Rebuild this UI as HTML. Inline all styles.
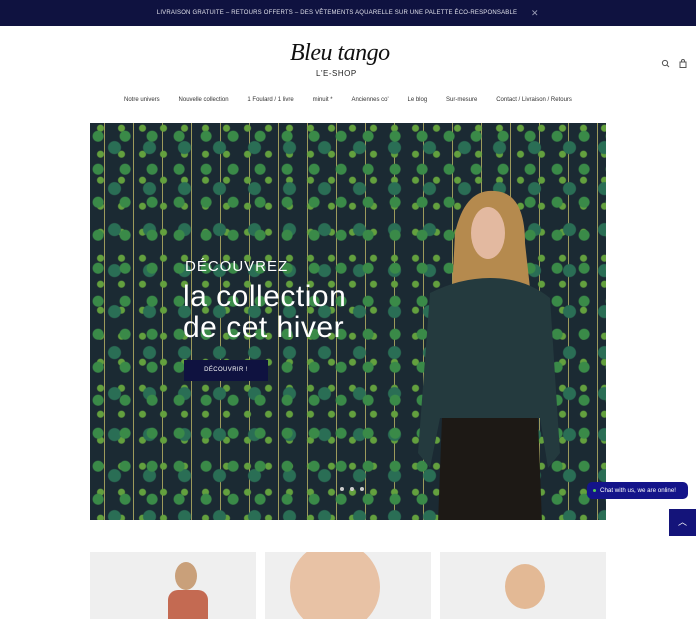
<!DOCTYPE html>
<html><head><meta charset="utf-8"><style>
*{margin:0;padding:0;box-sizing:border-box}
body{width:696px;height:619px;overflow:hidden;background:#fff;font-family:"Liberation Sans",sans-serif;position:relative}
.top{position:absolute;left:0;top:0;width:696px;height:26px;background:#0f1240;color:#dfe0ea;font-size:6px;letter-spacing:.2px;line-height:26px}
.top span{position:absolute;left:155px;top:0;width:364px;text-align:center;white-space:nowrap}
.top b{position:absolute;left:531px;top:0;font-size:9px;color:#9a9cb5;font-weight:normal}
.logo{position:absolute;left:290px;top:40px;font-family:"Liberation Serif",serif;font-style:italic;font-size:24px;color:#111;letter-spacing:-.5px}
.shop{position:absolute;left:316px;top:69px;font-size:8px;color:#222;letter-spacing:.5px}
.nav{position:absolute;top:97px;left:124px;width:448px;font-size:6px;color:#333;display:flex;justify-content:space-between;white-space:nowrap}
.hero{position:absolute;left:90px;top:123px;width:516px;height:397px;overflow:hidden;background:#1b2a33;
background-image:radial-gradient(circle at 30% 40%,#3a8a48 0 5px,transparent 6px),radial-gradient(circle at 70% 60%,#2a6e55 0 6px,transparent 7px),radial-gradient(circle at 50% 20%,#63a03e 0 3px,transparent 4px),linear-gradient(90deg,transparent 49%,#9c9a5c 49% 51%,transparent 51%);
background-size:27px 33px,35px 41px,21px 26px,29px 47px}
.txt{position:absolute;color:#fff}
.btn{position:absolute;left:94px;top:237px;width:84px;height:21px;background:#0f1240;color:#fff;font-size:6px;text-align:center;line-height:21px;letter-spacing:.4px}
.card{position:absolute;top:552px;width:166px;height:67px;background:#efefef;overflow:hidden}
</style></head><body>
<div class="top"><span>LIVRAISON GRATUITE – RETOURS OFFERTS – DES VÊTEMENTS AQUARELLE SUR UNE PALETTE ÉCO-RESPONSABLE</span><b>✕</b></div>
<div class="logo">Bleu tango</div>
<div class="shop">L'E-SHOP</div>
<svg style="position:absolute;left:661px;top:59px" width="26" height="9"><circle cx="4" cy="4" r="2.6" fill="none" stroke="#555" stroke-width="1"/><line x1="6" y1="6" x2="8" y2="8" stroke="#555"/><path d="M19 3h6v5.5h-6z M20.5 3v-1a1.5 1.5 0 0 1 3 0v1" fill="none" stroke="#555" stroke-width="1"/></svg>
<div class="nav"><span>Notre univers</span><span>Nouvelle collection</span><span>1 Foulard / 1 livre</span><span>minuit *</span><span>Anciennes co'</span><span>Le blog</span><span>Sur-mesure</span><span>Contact / Livraison / Retours</span></div>
<div class="hero">
<svg style="position:absolute;left:310px;top:60px" width="170" height="340">
<path d="M55 50 Q65 5 95 8 Q125 10 125 60 L135 150 L110 110 L80 110 L50 150 Z" fill="#b58a4e"/>
<ellipse cx="88" cy="50" rx="17" ry="26" fill="#e3b9a0"/>
<path d="M30 110 Q60 95 90 95 Q125 95 150 115 L160 270 L148 285 L140 235 L40 235 L30 285 L18 270 Z" fill="#243a3e"/>
<path d="M42 235 L138 235 L142 340 L38 340 Z" fill="#1d1915"/>
</svg>
<div class="txt" style="left:95px;top:135px;font-size:15px;letter-spacing:1px">DÉCOUVREZ</div>
<div class="txt" style="left:93px;top:158px;font-size:30px;line-height:31px;letter-spacing:.5px">la collection<br>de cet hiver</div>
<div class="btn">DÉCOUVRIR !</div>
<div style="position:absolute;left:250px;top:364px;width:4px;height:4px;border-radius:50%;background:#ccc;box-shadow:10px 0 #ccc,20px 0 #ccc"></div>
</div>
<div style="position:absolute;left:587px;top:482px;width:101px;height:17px;background:#14148a;border-radius:5px;color:#fff;font-size:6.2px;line-height:17px;padding-left:13px">Chat with us, we are online!<i style="position:absolute;left:6px;top:7px;width:3px;height:3px;border-radius:50%;background:#5c5"></i></div>
<div style="position:absolute;left:669px;top:509px;width:27px;height:27px;background:#14147a;color:#fff;text-align:center;font-size:9px;line-height:27px">︿</div>
<div class="card" style="left:90px"><div style="position:absolute;left:85px;top:10px;width:22px;height:28px;border-radius:50%;background:#c9a07a"></div><div style="position:absolute;left:78px;top:38px;width:40px;height:40px;background:#c46a52;border-radius:10px 10px 0 0"></div></div>
<div class="card" style="left:265px"><div style="position:absolute;left:25px;top:-10px;width:90px;height:90px;border-radius:50%;background:#e8c2a5"></div></div>
<div class="card" style="left:440px"><div style="position:absolute;left:65px;top:12px;width:40px;height:45px;border-radius:50%;background:#e3b995"></div></div>
</body></html>
